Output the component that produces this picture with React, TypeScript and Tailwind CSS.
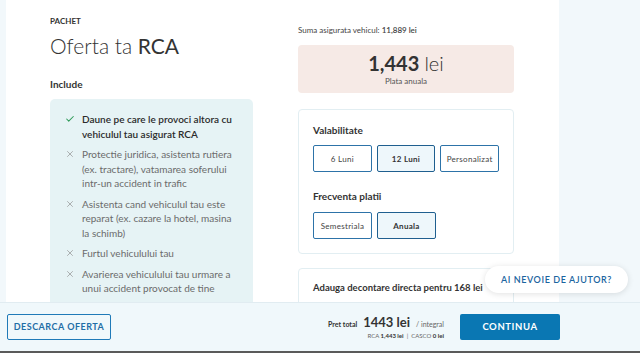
import { Check, X } from 'lucide-react';

const ITEMS = [
  { ok: true, text: 'Daune pe care le provoci altora cu vehiculul tau asigurat RCA' },
  { ok: false, text: 'Protectie juridica, asistenta rutiera (ex. tractare), vatamarea soferului intr-un accident in trafic' },
  { ok: false, text: 'Asistenta cand vehiculul tau este reparat (ex. cazare la hotel, masina la schimb)' },
  { ok: false, text: 'Furtul vehiculului tau' },
  { ok: false, text: 'Avarierea vehiculului tau urmare a unui accident provocat de tine' },
];

function Opt({ active, children }: { active?: boolean; children: React.ReactNode }) {
  return (
    <button
      className={`h-[27px] w-[59px] rounded-[2px] text-[8px] tracking-[0.3px] ${
        active
          ? 'border-[1.5px] border-[#1f5f8f] bg-[#eef7fb] font-bold text-[#333]'
          : 'border border-[#2d73a8] bg-white text-[#444]'
      }`}
    >
      {children}
    </button>
  );
}

export default function App() {
  return (
    <div
      className="relative flex h-[353px] w-[640px] flex-col overflow-hidden bg-[#f2f8fb] text-[#333]"
      style={{ fontFamily: 'Lato, "Noto Sans", sans-serif' }}
    >
      <div className="flex-1 overflow-hidden">
        <div className="ml-[6px] flex h-full w-[553px] gap-[45px] bg-white pl-[44px]">
          <div className="w-[203px] shrink-0">
            <div className="mt-[16px] text-[8px] font-bold leading-[10px] text-[#333]">PACHET</div>
            <h1 className="mt-[7px] text-[21px] font-light leading-[26px] text-[#333]">
              Oferta ta <span className="font-normal">RCA</span>
            </h1>
            <div className="mt-[19px] text-[10px] font-bold leading-[12px]">Include</div>
            <ul className="mt-[9px] h-[300px] rounded-t-[5px] bg-[#e6f3f5] pl-[15px] pr-[14px] pt-[13px]">
              {ITEMS.map((it, i) => (
                <li key={i} className="mb-[6px] flex gap-[7px]">
                  {it.ok ? (
                    <Check className="mt-[2px] h-[10px] w-[10px] shrink-0 text-[#2e9a58]" strokeWidth={2.5} />
                  ) : (
                    <X className="mt-[2px] h-[10px] w-[10px] shrink-0 text-[#8c8c8c]" strokeWidth={1.6} />
                  )}
                  <span
                    className={`text-[10px] leading-[14.5px] ${
                      it.ok ? 'font-semibold text-[#2b2b2b]' : 'text-[#6b6b6b]'
                    }`}
                  >
                    {it.text}
                  </span>
                </li>
              ))}
            </ul>
          </div>

          <div className="w-[216px] shrink-0">
            <div className="mt-[25px] text-[8px] leading-[10px] text-[#444]">
              Suma asigurata vehicul: <span className="font-semibold">11,889 lei</span>
            </div>
            <div className="mt-[10px] flex h-[48px] flex-col items-center justify-center rounded-[4px] bg-[#f6eae6]">
              <div className="text-[20px] leading-[22px] text-[#333]">
                <span className="font-bold">1,443</span> <span className="font-light">lei</span>
              </div>
              <div className="mt-[2px] text-[8px] leading-[10px] text-[#555]">Plata anuala</div>
            </div>

            <div className="mt-[16px] rounded-[4px] border border-[#e2eef2] px-[14px] pb-[14px] pt-[14px]">
              <div className="text-[10px] font-bold leading-[12px]">Valabilitate</div>
              <div className="mt-[9px] flex gap-[5px]">
                <Opt>6 Luni</Opt>
                <Opt active>12 Luni</Opt>
                <Opt>Personalizat</Opt>
              </div>
              <div className="mt-[18px] text-[10px] font-bold leading-[12px]">Frecventa platii</div>
              <div className="mt-[10px] flex gap-[5px]">
                <Opt>Semestriala</Opt>
                <Opt active>Anuala</Opt>
              </div>
            </div>

            <div className="mt-[14px] h-[60px] rounded-[4px] border border-[#e2eef2] px-[14px] pt-[13px]">
              <div className="whitespace-nowrap text-[9.5px] font-bold leading-[12px] text-[#333]">
                Adauga decontare directa pentru 168 lei
              </div>
            </div>
          </div>
        </div>
      </div>

      <button className="absolute left-[485px] top-[266px] h-[27px] w-[143px] rounded-full bg-white text-[9px] font-semibold tracking-[0.6px] text-[#1b65a0] shadow-[0_1px_6px_rgba(0,0,0,0.12)]">
        AI NEVOIE DE AJUTOR?
      </button>

      <footer className="flex h-[49px] shrink-0 items-center border-t border-[#e1ecf1] bg-[#f0f8fb] pl-[7px] pr-[80px]">
        <button className="h-[26px] w-[104px] rounded-[2px] border-[1.5px] border-[#1f7ab8] text-[9px] font-bold tracking-[0.5px] text-[#1f6ea6]">
          DESCARCA OFERTA
        </button>
        <div className="ml-auto flex flex-col items-end">
          <div className="flex items-baseline gap-[6px]">
            <span className="text-[7px] font-bold text-[#333]">Pret total</span>
            <span className="text-[13px] font-bold leading-[16px] text-[#333]">1443 lei</span>
            <span className="text-[7px] text-[#666]">/ integral</span>
          </div>
          <div className="mt-[2px] text-[6px] leading-[8px] text-[#666]">
            RCA <span className="font-bold text-[#333]">1,443 lei</span> &nbsp;|&nbsp; CASCO{' '}
            <span className="font-bold text-[#333]">0 lei</span>
          </div>
        </div>
        <button className="ml-[16px] h-[26px] w-[100px] rounded-[2px] bg-[#0a77b3] text-[9.5px] font-bold tracking-[0.6px] text-white">
          CONTINUA
        </button>
      </footer>
      <div className="h-[2px] shrink-0 bg-[#5a5a5a]" />
    </div>
  );
}
